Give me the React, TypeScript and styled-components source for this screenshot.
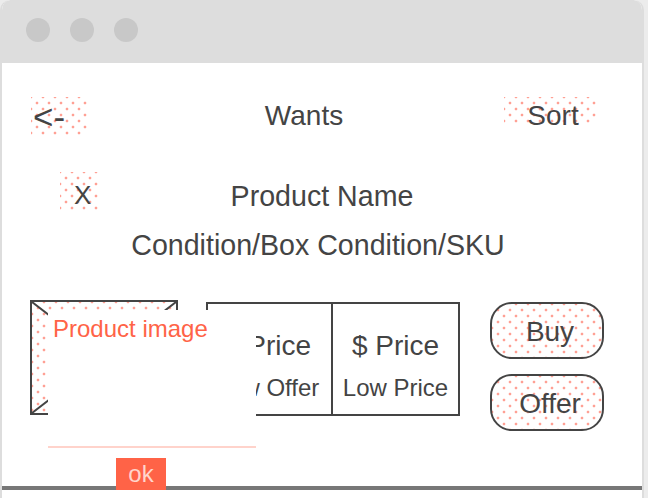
import React from "react";
import styled, { createGlobalStyle } from "styled-components";

const Global = createGlobalStyle`
  html, body { margin: 0; padding: 0; background: #ececec; }
  body {
    font-family: "Liberation Sans", Arial, sans-serif;
    color: #444;
    overflow: hidden;
  }
  * { box-sizing: border-box; }
`;

const DOT = "#ffa094";
const dotLayers = `radial-gradient(circle, ${DOT} 1.1px, transparent 1.7px), radial-gradient(circle, ${DOT} 1.1px, transparent 1.7px)`;

const Window = styled.div`
  width: 644px;
  height: 498px;
  border: 2px solid #ddd;
  border-top: 0;
  border-bottom: 0;
  border-radius: 10px 10px 0 0;
  background: #fff;
  overflow: hidden;
  display: flex;
  flex-direction: column;
`;

const TitleBar = styled.div`
  height: 63px;
  margin: 0 -2px;
  background: #ddd;
  border-radius: 10px 10px 0 0;
  display: flex;
  align-items: center;
  gap: 20px;
  padding: 0 0 3px 26px;
  flex-shrink: 0;
`;

const Light = styled.span`
  width: 24px;
  height: 24px;
  border-radius: 50%;
  background: #c8c8c8;
`;

const Header = styled.div`
  display: flex;
  align-items: flex-start;
  height: 38px;
  margin-top: 34px;
  padding: 0 44px 0 29px;
  font-size: 28px;
  line-height: 38px;
`;

const Dotted = styled.div`
  background-color: #fff;
  background-image: ${dotLayers};
  background-size: 12px 12px;
  background-position: 0 0, 6px 6px;
`;

const BackBox = styled(Dotted)`
  width: 58px;
  height: 38px;
  padding-left: 2px;
  font-size: 35px;
  line-height: 40px;
`;

const Title = styled.div`
  flex: 1;
  text-align: center;
  padding-left: 15px;
`;

const SortBox = styled(Dotted)`
  width: 94px;
  height: 38px;
  text-align: center;
  padding-left: 4px;
  background-image: linear-gradient(to bottom, transparent 28px, #fff 28px), ${dotLayers};
  background-size: 100% 100%, 12px 12px, 12px 12px;
  background-position: 0 0, 0 0, 6px 6px;
`;

const NameRow = styled.div`
  display: grid;
  grid-template-columns: 1fr auto 1fr;
  align-items: start;
  margin-top: 37px;
`;

const CloseBox = styled(Dotted)`
  justify-self: start;
  margin-left: 58px;
  width: 40px;
  height: 38px;
  padding: 8px 0 0 14px;
  font-size: 26px;
  line-height: 30px;
`;

const Name = styled.div`
  font-size: 28.6px;
  line-height: 32px;
  padding-top: 8px;
  text-align: center;
`;

const Meta = styled.div`
  margin-top: 17px;
  font-size: 28.6px;
  line-height: 32px;
  text-align: center;
  padding-right: 8px;
`;

const ProductRow = styled.div`
  display: flex;
  align-items: flex-start;
  margin-top: 39px;
  padding-left: 28px;
`;

const ImageBox = styled(Dotted)`
  position: relative;
  width: 148px;
  height: 115px;
  border: 2px solid #444;
  flex-shrink: 0;
`;

const Cross = styled.svg`
  display: block;
  width: 100%;
  height: 100%;
`;

const Popup = styled.div`
  position: absolute;
  left: 16px;
  top: 8px;
  width: 208px;
  height: 138px;
  background: #fff;
  border-bottom: 2px solid #ffd3cb;
  padding: 5px 5px;
  color: #ff6347;
  font-size: 24px;
  line-height: 28px;
`;

const OkButton = styled.div`
  position: absolute;
  left: 68px;
  top: calc(100% + 12px);
  width: 50px;
  height: 32px;
  background: #ff6347;
  color: #ffd5cc;
  font-size: 24px;
  line-height: 32px;
  text-align: center;
`;

const PriceTable = styled.div`
  display: grid;
  grid-template-columns: 1fr 1fr;
  width: 254px;
  height: 114px;
  margin: 2px 0 0 28px;
  border: 2px solid #444;
`;

const PriceCell = styled.div<{ $divider?: boolean }>`
  display: flex;
  flex-direction: column;
  align-items: center;
  padding-top: 26px;
  padding-right: ${(p) => (p.$divider ? "4px" : "0")};
  gap: 12px;
  border-right: ${(p) => (p.$divider ? "2px solid #444" : "0")};
  white-space: nowrap;
`;

const PriceMain = styled.div`
  font-size: 28px;
  line-height: 32px;
`;

const PriceSub = styled.div`
  font-size: 24px;
  line-height: 28px;
`;

const Actions = styled.div`
  display: flex;
  flex-direction: column;
  gap: 15px;
  margin: 2px 0 0 30px;
`;

const Pill = styled(Dotted)`
  width: 114px;
  height: 57px;
  border: 2px solid #444;
  border-radius: 22px;
  padding-left: 6px;
  font-size: 28px;
  line-height: 56px;
  text-align: center;
`;

const Footer = styled.div`
  margin-top: 55px;
  border-top: 4px solid #777;
  flex: 1;
`;

export default function App() {
  return (
    <>
      <Global />
      <Window>
        <TitleBar>
          <Light />
          <Light />
          <Light />
        </TitleBar>
        <Header>
          <BackBox>&lt;-</BackBox>
          <Title>Wants</Title>
          <SortBox>Sort</SortBox>
        </Header>
        <NameRow>
          <CloseBox>X</CloseBox>
          <Name>Product Name</Name>
        </NameRow>
        <Meta>Condition/Box Condition/SKU</Meta>
        <ProductRow>
          <ImageBox>
            <Cross viewBox="0 0 144 111" preserveAspectRatio="none">
              <line x1="0" y1="0" x2="144" y2="111" stroke="#444" strokeWidth="2" />
              <line x1="144" y1="0" x2="0" y2="111" stroke="#444" strokeWidth="2" />
            </Cross>
            <Popup>
              Product image
              <OkButton>ok</OkButton>
            </Popup>
          </ImageBox>
          <PriceTable>
            <PriceCell $divider>
              <PriceMain>$ Price</PriceMain>
              <PriceSub>Low Offer</PriceSub>
            </PriceCell>
            <PriceCell>
              <PriceMain>$ Price</PriceMain>
              <PriceSub>Low Price</PriceSub>
            </PriceCell>
          </PriceTable>
          <Actions>
            <Pill>Buy</Pill>
            <Pill>Offer</Pill>
          </Actions>
        </ProductRow>
        <Footer />
      </Window>
    </>
  );
}
